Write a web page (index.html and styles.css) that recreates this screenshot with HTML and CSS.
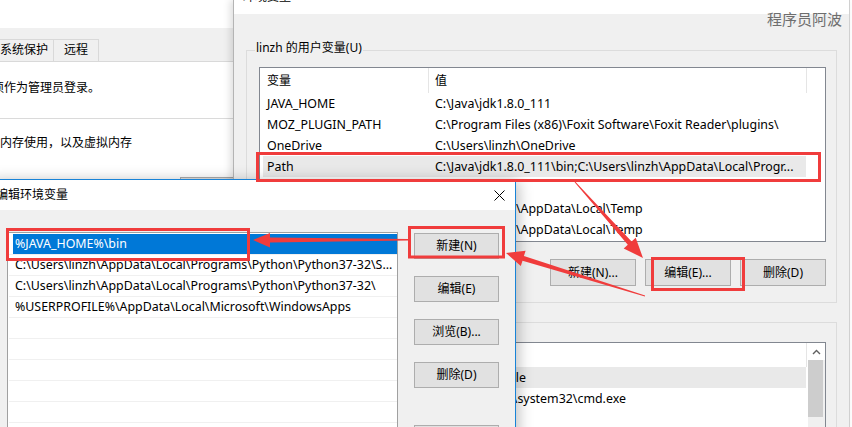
FILE: index.html
```html
<!DOCTYPE html>
<html lang="zh-CN">
<head>
<meta charset="utf-8">
<title>编辑环境变量</title>
<link rel="stylesheet" href="styles.css">
</head>
<body>
<div class="desk">

  <section class="win sysprop">
    <div class="sp-top"></div>
    <div class="sp-tabs">
      <div class="tab tab-first">系统保护</div>
      <div class="tab">远程</div>
    </div>
    <div class="sp-sec sp-sec1"><p class="sp-text sp-shift">你必须作为管理员登录。</p></div>
    <div class="sp-sec sp-sec2"><p class="sp-text">内存使用，以及虚拟内存</p></div>
    <div class="sp-btnrow"><div class="sp-btn"></div></div>
  </section>

  <section class="win envwin">
    <div class="ew-title">
      <span class="ew-title-text">环境变量</span>
      <span class="ew-close">✕</span>
    </div>
    <div class="ew-body">
      <div class="group">
        <div class="group-label">linzh 的用户变量(U)</div>
        <div class="listview lv1">
          <div class="lv-head"><div class="h1">变量</div><div class="h2">值</div></div>
          <div class="lv-row"><div class="c1">JAVA_HOME</div><div class="c2">C:\Java\jdk1.8.0_111</div></div>
          <div class="lv-row"><div class="c1">MOZ_PLUGIN_PATH</div><div class="c2">C:\Program Files (x86)\Foxit Software\Foxit Reader\plugins\</div></div>
          <div class="lv-row"><div class="c1">OneDrive</div><div class="c2">C:\Users\linzh\OneDrive</div></div>
          <div class="lv-row sel"><div class="c1">Path</div><div class="c2">C:\Java\jdk1.8.0_111\bin;C:\Users\linzh\AppData\Local\Progr...</div></div>
          <div class="lv-row"><div class="c1">PyCharm</div><div class="c2">D:\PyCharm</div></div>
          <div class="lv-row"><div class="c1">TEMP</div><div class="c2">C:\Users\linzh\AppData\Local\Temp</div></div>
          <div class="lv-row"><div class="c1">TMP</div><div class="c2">C:\Users\linzh\AppData\Local\Temp</div></div>
        </div>
        <div class="btnrow">
          <div class="wbtn">新建(N)...</div>
          <div class="wbtn">编辑(E)...</div>
          <div class="wbtn">删除(D)</div>
        </div>
      </div>
      <div class="group group2">
        <div class="group-label">系统变量(S)</div>
        <div class="listview lv2">
          <div class="lv2-main">
            <div class="lv-head lv-head2"><div class="h1">变量</div><div class="h2">值</div></div>
            <div class="lv-row sel"><div class="c1">AllUsersProfile</div><div class="c2">C:\Users\Profile</div></div>
            <div class="lv-row"><div class="c1">ComSpec</div><div class="c2">C:\WINDOWS\system32\cmd.exe</div></div>
            <div class="lv-row"><div class="c1">NUMBER_OF_PROCESSORS</div><div class="c2">4</div></div>
          </div>
          <div class="vscroll">
            <div class="vs-up"><svg width="9" height="6" viewBox="0 0 9 6"><path d="M1 5 L4.5 1.5 L8 5" fill="none" stroke="#606060" stroke-width="1.4"/></svg></div>
            <div class="vs-thumb"></div>
          </div>
        </div>
      </div>
    </div>
  </section>

  <section class="win editwin">
    <div class="ed-title">
      <span class="ed-title-text">编辑环境变量</span>
      <svg class="ed-close" width="11" height="11" viewBox="0 0 11 11"><path d="M0.5 0.5 L10.5 10.5 M10.5 0.5 L0.5 10.5" stroke="#000" stroke-width="1"/></svg>
    </div>
    <div class="ed-body">
      <div class="ed-list">
        <div class="ed-item sel">%JAVA_HOME%\bin</div>
        <div class="ed-item">C:\Users\linzh\AppData\Local\Programs\Python\Python37-32\S...</div>
        <div class="ed-item">C:\Users\linzh\AppData\Local\Programs\Python\Python37-32\</div>
        <div class="ed-item">%USERPROFILE%\AppData\Local\Microsoft\WindowsApps</div>
        <div class="ed-item"></div>
        <div class="ed-item"></div>
        <div class="ed-item"></div>
        <div class="ed-item"></div>
        <div class="ed-item"></div>
        <div class="ed-item"></div>
      </div>
      <div class="ed-btns">
        <div class="wbtn ebtn">新建(N)</div>
        <div class="wbtn ebtn">编辑(E)</div>
        <div class="wbtn ebtn">浏览(B)...</div>
        <div class="wbtn ebtn">删除(D)</div>
        <div class="wbtn ebtn ebtn-gap">编辑文本(T)...</div>
      </div>
    </div>
  </section>

  <div class="watermark">程序员阿波</div>

  <svg class="annot" width="852" height="427" viewBox="0 0 852 427">
    <g fill="none" stroke="#f03c3c" stroke-width="3">
      <rect x="257.5" y="153.5" width="562" height="27"/>
      <rect x="7.5" y="229.5" width="241" height="30"/>
      <rect x="409.5" y="227.5" width="94" height="29.5"/>
      <rect x="652.5" y="258.5" width="91" height="31"/>
    </g>
    <g fill="#f03c3c">
      <polygon points="408,239 270,237.5 270,233 253,240 270,247.5 270,242.5 408,240.5"/>
      <polygon points="644.9,296.5 522.5,260.7 520.8,265.9 506,253 525.6,250.7 523.9,255.9 645.1,295.5"/>
      <polygon points="574.6,182.3 627.8,244.8 623.7,248.4 643,258 635.7,237.8 631.6,241.4 575.4,181.7"/>
    </g>
  </svg>

</div>
</body>
</html>
```

FILE: styles.css
```css
* { box-sizing: border-box; }
html, body { margin: 0; padding: 0; }
body {
  width: 852px;
  height: 427px;
  overflow: hidden;
  background: #fff;
  font-family: "Noto Sans", "Noto Sans CJK SC", sans-serif;
  font-size: 12px;
  color: #000;
}
.desk { position: relative; width: 852px; height: 427px; overflow: hidden; }
.win { position: absolute; }

/* background: system properties window */
.sysprop {
  left: 0; top: 0; width: 240px; height: 427px;
  background: #fff;
  display: flex; flex-direction: column;
}
.sp-top { height: 28px; background: #fff; flex: none; }
.sp-tabs {
  height: 34px; flex: none;
  background: #f0f0f0;
  border-bottom: 1px solid #d9d9d9;
  display: flex; align-items: flex-end;
  padding-top: 11px;
}
.tab {
  height: 22px;
  border: 1px solid #d9d9d9; border-bottom: none;
  padding: 0 10px;
  line-height: 20px;
  background: #f0f0f0;
}
.tab-first { margin-left: -6px; padding: 0 5px; }
.tab + .tab { border-left: none; }
.sp-sec { flex: none; }
.sp-sec1 { height: 57px; border-bottom: 1px solid #dadada; padding-top: 19px; }
.sp-sec2 { height: 58px; padding-top: 17px; }
.sp-text { margin: 0; line-height: 14px; white-space: nowrap; }
.sp-shift { margin-left: -32px; }
.sp-btnrow { display: flex; padding-left: 180px; }
.sp-btn { width: 60px; height: 30px; background: #e1e1e1; border: 1px solid #adadad; }

/* environment variables window */
.envwin {
  left: 233px; top: 0; width: 617px; height: 440px;
  background: #f0f0f0;
  border-left: 1px solid #b4b4b4;
  border-right: 1px solid #d0d0d0;
  box-shadow: -3px 0 7px rgba(0,0,0,0.13);
  display: flex; flex-direction: column;
}
.ew-title {
  height: 14px; flex: none;
  background: #fff;
  display: flex; justify-content: space-between;
  padding: 0 6px 0 9px;
  overflow: hidden;
}
.ew-title-text { margin-top: -10px; line-height: 14px; }
.ew-close { margin-top: -11px; line-height: 14px; font-size: 12px; color: #333; }
.ew-body { padding: 36px 12px 0 12px; }
.group {
  border: 1px solid #dcdcdc;
  padding: 0 10px 16px 12px;
}
.group-label {
  display: block;
  width: max-content;
  margin: -10px 0 0 -4px;
  padding: 0 1px;
  line-height: 14px;
  background: #f0f0f0;
}
.listview {
  background: #fff;
  border: 1px solid #828790;
}
.lv1 { height: 175px; margin-top: 12px; }
.lv-head { display: flex; height: 25px; width: 547px; border-right: 1px solid #e5e5e5; line-height: 25px; }
.h1 { width: 169px; padding-left: 7px; border-right: 1px solid #e5e5e5; }
.h2 { padding-left: 6px; }
.lv-row {
  display: flex; height: 21px; line-height: 21px;
  margin-left: 3px; width: 543px;
  white-space: nowrap; overflow: hidden;
  font-size: 12.4px;
}
.lv-row.sel { background: #e9e9e9; }
.c1 { width: 172px; padding-left: 4px; flex: none; }
.c2 { flex: none; }
.btnrow { display: flex; justify-content: flex-end; gap: 9px; margin-top: 17px; }
.wbtn {
  width: 86px; height: 27px;
  background: #e1e1e1; border: 1px solid #adadad;
  line-height: 25px; text-align: center;
  white-space: nowrap;
}
.group2 { margin-top: 19px; height: 140px; }
.lv2 { height: 110px; margin-top: 15px; display: flex; }
.lv2-main { width: 548px; flex: none; }
.lv-head2 { height: 24px; line-height: 24px; }
.vscroll { width: 17px; flex: none; margin-left: auto; background: #f0f0f0; display: flex; flex-direction: column; }
.vs-up { height: 17px; background: #fff; display: flex; align-items: center; justify-content: center; }
.vs-thumb { height: 57px; width: 15px; background: #cdcdcd; }

/* front dialog */
.editwin {
  left: -12px; top: 179px; width: 528px; height: 270px;
  background: #f0f0f0;
  border: 1px solid #1883d7;
  box-shadow: 2px 2px 14px rgba(0,0,0,0.28);
  display: flex; flex-direction: column;
}
.ed-title {
  height: 30px; flex: none;
  background: #fff;
  display: flex; align-items: center; justify-content: space-between;
  padding: 0 10px 0 7px;
}
.ed-title-text { line-height: 16px; }
.ed-body { display: flex; gap: 16px; padding: 22px 0 0 18px; }
.ed-list {
  width: 391px; height: 230px; flex: none;
  background: #fff;
  border: 1px solid #a0a0a0;
  padding: 1px 0 0 1px;
}
.ed-item {
  height: 21px; line-height: 20px;
  border-bottom: 1px solid #f0f0f0;
  padding-left: 6px;
  white-space: nowrap; overflow: hidden;
  font-size: 12.4px;
}
.ed-item.sel { background: #0078d7; color: #fff; box-shadow: inset 4px 0 0 #fff; }
.ed-btns { display: flex; flex-direction: column; gap: 17px; padding-top: 1px; }
.ebtn { width: 85px; height: 26px; line-height: 24px; }
.ebtn-gap { margin-top: 20px; }

/* overlays */
.watermark {
  position: absolute; left: 767px; top: 10px;
  font-size: 15px; line-height: 17px;
  color: #6e6e6e;
  font-family: "Noto Sans CJK SC", sans-serif;
}
.annot { position: absolute; left: 0; top: 0; pointer-events: none; }
```
